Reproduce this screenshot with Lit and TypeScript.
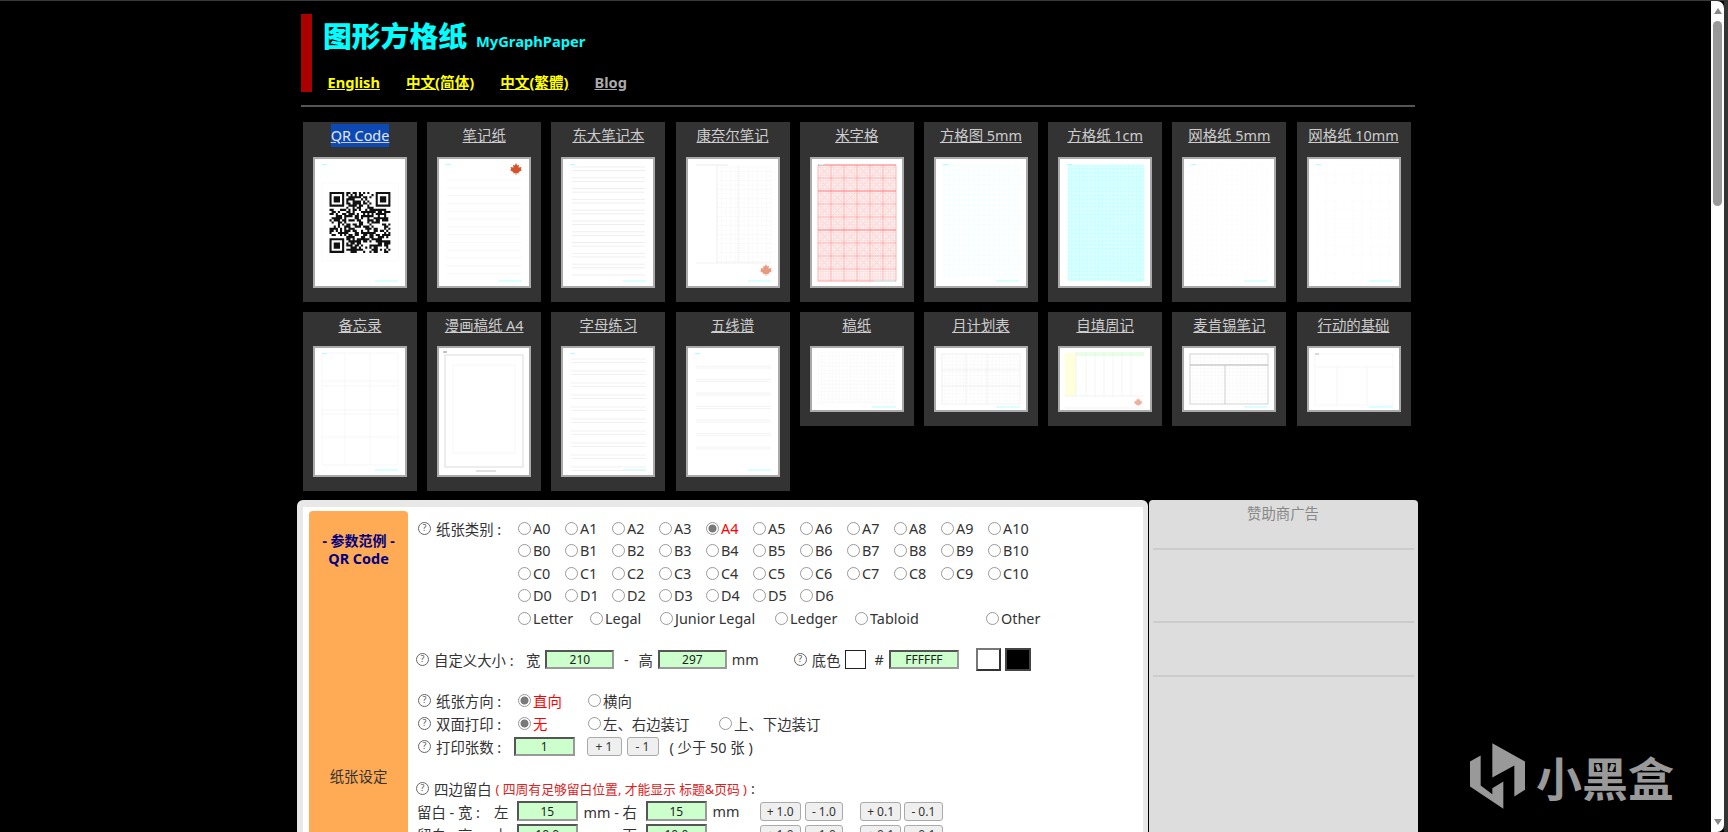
import {LitElement, html, css, svg} from 'lit';
import {customElement} from 'lit/decorators.js';

// helpers for the little paper previews
const hl = (ys: number[], x1: number, x2: number, c: string, w = 0.5) =>
  svg`<path d=${ys.map((y) => `M${x1} ${y}H${x2}`).join('')} stroke=${c} stroke-width=${w} fill="none" />`;
const vl = (xs: number[], y1: number, y2: number, c: string, w = 0.5) =>
  svg`<path d=${xs.map((x) => `M${x} ${y1}V${y2}`).join('')} stroke=${c} stroke-width=${w} fill="none" />`;
const range = (a: number, b: number, s: number) => {
  const out: number[] = [];
  for (let v = a; v <= b + 0.01; v += s) out.push(v);
  return out;
};
const grid = (x1: number, y1: number, x2: number, y2: number, s: number, c: string, w = 0.4) =>
  svg`${hl(range(y1, y2, s), x1, x2, c, w)}${vl(range(x1, x2, s), y1, y2, c, w)}`;
const box = (x: number, y: number, w: number, h: number, c: string, sw = 0.5) =>
  svg`<rect x=${x} y=${y} width=${w} height=${h} fill="none" stroke=${c} stroke-width=${sw} />`;
const marks = (h = 127, x = 60) =>
  svg`${hl([5.5], 7, 12, '#aaffff', 1)}${hl([h - 5], x, 83, '#b5ffff', 1)}`;
const leaf = (x: number, y: number, c: string, s = 1) =>
  svg`<polygon transform="translate(${x} ${y}) scale(${s})" fill=${c}
    points="6,0 7.2,2.5 9,1.8 8.5,4.5 11.5,4 10.8,6 12,7 8.5,9.2 8.8,10.5 6.4,10 6.4,12 5.6,12 5.6,10 3.2,10.5 3.5,9.2 0,7 1.2,6 .5,4 3.5,4.5 3,1.8 4.8,2.5" />`;

function qrModules() {
  const n = 29;
  let d = '';
  const inFinder = (r: number, c: number) =>
    (r < 8 && c < 8) || (r < 8 && c >= n - 8) || (r >= n - 8 && c < 8);
  let seed = 2463534242;
  const next = () => {
    seed ^= seed << 13;
    seed ^= seed >>> 17;
    seed ^= seed << 5;
    return seed >>> 0;
  };
  for (let r = 0; r < n; r++) {
    for (let c = 0; c < n; c++) {
      if (next() % 100 < 52 && !inFinder(r, c)) d += `M${c} ${r}h1v1h-1z`;
    }
  }
  const finder = (x: number, y: number) =>
    `M${x} ${y}h7v7h-7zM${x + 1} ${y + 1}v5h5v-5zM${x + 2} ${y + 2}h3v3h-3z`;
  return d + finder(0, 0) + finder(n - 7, 0) + finder(0, n - 7);
}

function crosses(x1: number, y1: number, x2: number, y2: number, s: number) {
  let d = '';
  for (let y = y1; y + s <= y2 + 0.01; y += s) {
    for (let x = x1; x + s <= x2 + 0.01; x += s) {
      d += `M${x} ${y}l${s} ${s}M${x + s} ${y}l${-s} ${s}`;
    }
  }
  return d;
}

const previews: Record<string, () => unknown> = {
  qr: () => svg`${marks()}${box(7, 24, 76.5, 78, '#f6f6f6')}
    <path transform="translate(14.5 33) scale(2.1)" fill-rule="evenodd" fill="#111" d=${qrModules()} />`,
  note: () => svg`${hl([5.5], 7, 12, '#aaffff', 1)}${hl([122], 60, 83, '#b5ffff', 1)}
    ${leaf(71, 4, '#d5532b')}${hl(range(21, 115, 7.8), 8, 82, '#eeeeee')}`,
  todai: () => svg`${marks()}${hl(range(8, 118, 3.6).filter((_, i) => i % 3 !== 2), 9, 82, '#dddddd', 0.5)}`,
  cornell: () => svg`${hl([122], 60, 83, '#b5ffff', 1)}
    ${grid(29, 8, 83, 104, 4.5, '#f2f2f2')}${vl([29, 50], 6, 104, '#e6e6e6')}
    ${hl([104], 8, 83, '#e0e0e0')}${hl([6], 8, 40, '#d5d5d5')}${leaf(72, 105, '#e89a80')}`,
  mi: () => svg`<rect x="6" y="6" width="78" height="116" fill="#fff6f6" />
    <path d=${crosses(6, 6, 84, 122, 13)} stroke="#ffb8b8" stroke-width="0.4" fill="none" />
    ${grid(6, 6, 84, 122, 2.6, '#ffcccc', 0.5)}${grid(6, 6, 84, 122, 13, '#ff9c9c', 0.6)}
    ${hl([6, 32, 71, 122], 6, 84, '#ff8888', 0.8)}${marks(127, 62)}`,
  sq5: () => svg`${grid(8, 6, 83, 120, 5, '#e6ffff', 0.5)}${marks()}`,
  sq1: () => svg`<rect x="8" y="6" width="76" height="116" fill="#dcffff" />
    ${grid(8, 6, 84, 122, 3.8, '#b8ffff', 0.5)}${marks()}`,
  grid5: () => svg`${grid(8, 6, 83, 120, 5, '#f8f8f8', 0.5)}${marks()}`,
  grid10: () => svg`${grid(8, 6, 83, 120, 9, '#f9f9f9', 0.5)}${marks()}`,
  memo: () => svg`${marks()}${vl([7, 30, 55, 83], 5, 117, '#eeeeee')}
    ${hl([5, 33, 38, 62, 66, 89, 117], 7, 83, '#eeeeee')}`,
  manga: () => svg`${box(6, 7, 78, 112, '#e6e6e6', 1.4)}${box(14, 17, 62, 88, '#eeeeee')}
    ${hl([4], 4, 8, '#888888', 1)}${hl([123], 37, 57, '#999999', 0.6)}`,
  letters: () => svg`${marks()}${hl(range(11, 120, 12).flatMap((y) => [y, y + 3.5]), 8, 83, '#eeeeee', 0.8)}`,
  staff: () => svg`${marks()}${hl(range(18, 112, 13.5).flatMap((y) => [y, y + 2]), 8, 83, '#f0f0f0', 0.8)}`,
  draft: () => svg`${grid(6, 4, 84, 56, 3.6, '#f4f4f4', 0.4)}${hl([59], 60, 84, '#b5ffff', 1)}`,
  month: () => svg`${grid(6, 6, 84, 56, 3.6, '#f5f5f5', 0.4)}${box(6, 6, 78, 50, '#e6e6e6')}
    ${vl([30, 51], 6, 56, '#e4e4e4')}${hl([22, 38], 6, 84, '#e4e4e4')}${hl([59], 60, 84, '#b5ffff', 1)}`,
  week: () => svg`<rect x="5" y="5" width="11" height="43" fill="#ffffdd" />
    <rect x="16" y="4" width="68" height="4" fill="#e6ffe6" />
    ${vl([16, 26, 35, 44, 53, 62, 71], 4, 48, '#e8e8e8')}${hl([48, 60], 5, 84, '#e6e6e6')}
    ${leaf(74, 50, '#f0b0a0', 0.7)}`,
  mck: () => svg`${grid(6, 6, 84, 56, 3.6, '#f4f4f4', 0.4)}${box(6, 6, 78, 50, '#c4c4c4', 0.7)}
    ${hl([17], 6, 84, '#aaaaaa', 0.9)}${vl([41], 17, 56, '#bbbbbb', 0.7)}${hl([59], 60, 84, '#b5ffff', 1)}`,
  action: () => svg`${box(6, 6, 78, 51, '#eeeeee')}${hl([19], 6, 84, '#e8e8e8')}
    ${vl([28, 58], 19, 57, '#eaeaea')}${hl([6], 6, 10, '#bbbbbb', 1)}${hl([59], 60, 84, '#b5ffff', 1)}`,
};

const cards: {name: string; kind: string; wide?: boolean; on?: boolean}[] = [
  {name: 'QR Code', kind: 'qr', on: true},
  {name: '笔记纸', kind: 'note'},
  {name: '东大笔记本', kind: 'todai'},
  {name: '康奈尔笔记', kind: 'cornell'},
  {name: '米字格', kind: 'mi'},
  {name: '方格图 5mm', kind: 'sq5'},
  {name: '方格纸 1cm', kind: 'sq1'},
  {name: '网格纸 5mm', kind: 'grid5'},
  {name: '网格纸 10mm', kind: 'grid10'},
  {name: '备忘录', kind: 'memo'},
  {name: '漫画稿纸 A4', kind: 'manga'},
  {name: '字母练习', kind: 'letters'},
  {name: '五线谱', kind: 'staff'},
  {name: '稿纸', kind: 'draft', wide: true},
  {name: '月计划表', kind: 'month', wide: true},
  {name: '自填周记', kind: 'week', wide: true},
  {name: '麦肯锡笔记', kind: 'mck', wide: true},
  {name: '行动的基础', kind: 'action', wide: true},
];

const sizes = [
  ['A0', 'A1', 'A2', 'A3', 'A4', 'A5', 'A6', 'A7', 'A8', 'A9', 'A10'],
  ['B0', 'B1', 'B2', 'B3', 'B4', 'B5', 'B6', 'B7', 'B8', 'B9', 'B10'],
  ['C0', 'C1', 'C2', 'C3', 'C4', 'C5', 'C6', 'C7', 'C8', 'C9', 'C10'],
  ['D0', 'D1', 'D2', 'D3', 'D4', 'D5', 'D6'],
];

@customElement('app-root')
export class AppRoot extends LitElement {
  static override styles = css`
    :host {
      display: block;
      height: 832px;
      overflow: hidden;
      position: relative;
      background: #000;
      font-family: 'Noto Sans', 'Noto Sans CJK SC', sans-serif;
      font-size: 14.4px;
      color: #333;
    }
    .topline {
      position: absolute;
      left: 0;
      right: 0;
      top: 0;
      height: 1px;
      background: #3a3a3a;
    }
    .wrap {
      width: 1121px;
      margin-left: 297px;
      padding-top: 14px;
    }
    .head {
      display: flex;
      height: 78px;
      margin-left: 4px;
    }
    .bar {
      width: 11px;
      background: #aa0000;
    }
    .brand {
      margin-left: 11px;
    }
    .title {
      display: flex;
      align-items: baseline;
      gap: 9px;
      height: 46px;
      color: #00ffff;
      font-weight: 700;
    }
    .title b {
      font-size: 28.8px;
      line-height: 44px;
    }
    .title span {
      font-size: 14.7px;
    }
    .nav {
      display: flex;
      gap: 26px;
      padding-left: 4.5px;
      font-size: 14.6px;
      font-weight: 700;
      line-height: 24px;
      margin-top: 10px;
    }
    .nav a {
      color: #ffff00;
    }
    .nav a.blog {
      color: #aaa;
    }
    .rule {
      height: 2px;
      background: #555;
      margin: 13px 3px 0 4px;
    }
    .cards {
      display: grid;
      grid-template-columns: repeat(9, 114px);
      column-gap: 10.2px;
      row-gap: 10px;
      align-items: start;
      margin: 15px 0 0 6px;
    }
    .card {
      background: #333;
      padding: 0 10px 14px;
      text-align: center;
    }
    .card a {
      display: block;
      height: 28px;
      line-height: 28px;
      margin-bottom: 6.5px;
      color: #ccc;
      white-space: nowrap;
    }
    .card a span.on {
      background: #0c49b4;
      color: #e6e6e6;
      padding: 2px 0;
    }
    .thumb {
      display: block;
      box-sizing: border-box;
      width: 94px;
      height: 131px;
      border: 2px solid #aaa;
      background: #fff;
    }
    .thumb.wide {
      height: 66px;
    }
    .panels {
      display: flex;
      gap: 1px;
      margin-top: 9px;
    }
    .main {
      box-sizing: border-box;
      width: 850.5px;
      height: 500px;
      padding: 7px 5px 0 6px;
      background: #e8e8e8;
      border-radius: 6px 6px 0 0;
    }
    .sheet {
      display: flex;
      height: 100%;
      background: #fff;
      padding: 4px 0 0 6px;
      box-sizing: border-box;
    }
    .side {
      width: 99px;
      flex: none;
      background: #ffaa55;
      border-radius: 4px 4px 0 0;
      text-align: center;
      color: #000080;
      font-weight: 700;
    }
    .side p {
      margin: 0;
    }
    .side .ex {
      font-size: 14px;
      line-height: 18px;
      padding-top: 21px;
    }
    .side .qr {
      font-size: 14.4px;
      line-height: 18px;
    }
    .side .set {
      margin-top: 199px;
      font-weight: 400;
      color: #333;
      font-size: 14.4px;
      line-height: 20px;
    }
    .form {
      padding: 6px 0 0 10px;
    }
    .row {
      display: flex;
      align-items: center;
      height: 22.5px;
      white-space: nowrap;
    }
    .out {
      margin-left: -2px;
    }
    .lab {
      display: flex;
      align-items: center;
      gap: 5px;
      width: 100px;
      flex: none;
    }
    .lab.short {
      width: 96px;
    }
    .help {
      box-sizing: border-box;
      display: inline-block;
      width: 13px;
      height: 13px;
      flex: none;
      border: 1.2px solid #666;
      border-radius: 50%;
      font-size: 9px;
      line-height: 10.5px;
      text-align: center;
      color: #555;
    }
    .gap18 {
      margin-top: 18px;
      height: 24px;
    }
    .gap17 {
      margin-top: 17px;
      height: 24px;
    }
    .gap19 {
      margin-top: 19px;
    }
    .tall {
      height: 23px;
    }
    .sizes {
      display: grid;
      grid-template-columns: repeat(11, 47px);
    }
    .pick {
      display: inline-flex;
      align-items: center;
      gap: 2px;
    }
    .w70 {
      width: 70px;
    }
    .w72 {
      width: 72px;
    }
    .w80 {
      width: 80px;
    }
    .w115 {
      width: 115px;
    }
    .w131 {
      width: 131px;
    }
    input[type='radio'] {
      appearance: none;
      box-sizing: border-box;
      width: 13px;
      height: 13px;
      margin: 0;
      flex: none;
      border: 1px solid #999;
      border-radius: 50%;
      background: #fff;
    }
    input[type='radio']:checked {
      background: radial-gradient(circle, #7a7a7a 0 3.6px, #fff 4.4px);
    }
    .red {
      color: #ff0000;
    }
    .num {
      box-sizing: border-box;
      width: 69px;
      height: 19.5px;
      padding: 0;
      border: 2px solid;
      border-color: #555 #999 #999 #555;
      background: #ccffcc;
      font: 12px 'Noto Sans', sans-serif;
      color: #222;
      text-align: center;
      outline: none;
    }
    .n60 {
      width: 60.5px;
    }
    .n70 {
      width: 70px;
    }
    .btn {
      box-sizing: border-box;
      height: 19px;
      padding: 0;
      border: 1px solid #aaa;
      border-radius: 3px;
      background: #efefef;
      font: 12px 'Noto Sans', sans-serif;
      color: #333;
    }
    .b35 {
      width: 35px;
    }
    .b32 {
      width: 32px;
    }
    .b41 {
      width: 41px;
    }
    .b38 {
      width: 38.5px;
    }
    .wide-lab {
      width: 92px;
    }
    .dash {
      width: 24px;
      text-align: center;
    }
    .mm {
      width: 26px;
    }
    .swatch {
      box-sizing: border-box;
      width: 21px;
      height: 19px;
      border: 1px solid #222;
      background: #fff;
    }
    .chip {
      box-sizing: border-box;
      width: 25px;
      height: 23px;
      border: 2px solid;
      border-color: #777 #333 #333 #777;
      background: #fff;
    }
    .chip.dark {
      width: 26px;
      border-color: #444;
      background: #000;
    }
    .ml3 {
      margin-left: 3px;
    }
    .ml4 {
      margin-left: 4px;
    }
    .ml5 {
      margin-left: 5px;
    }
    .ml6 {
      margin-left: 6px;
    }
    .ml8 {
      margin-left: 8.6px;
    }
    .ml9 {
      margin-left: 9px;
    }
    .ml11 {
      margin-left: 11px;
    }
    .ml12 {
      margin-left: 12px;
    }
    .ml17 {
      margin-left: 17px;
    }
    .ml21 {
      margin-left: 21px;
    }
    .ml36 {
      margin-left: 36px;
    }
    .note {
      margin-left: 4px;
      color: #dd2222;
      font-size: 12.8px;
    }
    .mlab {
      width: 77px;
      margin-left: -1px;
    }
    .mid {
      width: 54px;
    }
    .ads {
      box-sizing: border-box;
      width: 269px;
      height: 500px;
      padding: 4px 4px 0;
      background: #dddddd;
      border-radius: 4px 4px 0 0;
      color: #888;
      text-align: center;
    }
    .ads div {
      border-bottom: 2px solid #cccccc;
    }
    .ads .a1 {
      height: 44px;
      line-height: 20px;
    }
    .ads .a2 {
      height: 71px;
    }
    .ads .a3 {
      height: 52px;
    }
    .scroll {
      position: absolute;
      top: 1px;
      right: 4px;
      bottom: 0;
      width: 13px;
      background: #fdfdfd;
      border-radius: 0 7px 7px 0;
    }
    .edge {
      position: absolute;
      top: 0;
      right: 0;
      bottom: 0;
      width: 4px;
      background: #333;
    }
    .thumbbar {
      position: absolute;
      top: 20px;
      left: 2px;
      width: 9px;
      height: 185px;
      border-radius: 4.5px;
      background: #999;
    }
    .up,
    .down {
      position: absolute;
      left: 2.5px;
      width: 0;
      height: 0;
      border-left: 4px solid transparent;
      border-right: 4px solid transparent;
    }
    .up {
      top: 7px;
      border-bottom: 6px solid #888;
    }
    .down {
      bottom: 7px;
      border-top: 6px solid #888;
    }
    .mark {
      position: absolute;
      left: 1470px;
      top: 743px;
      display: flex;
      align-items: center;
      gap: 11px;
      color: #999;
      font-family: 'Noto Sans CJK SC', sans-serif;
      font-size: 46px;
      font-weight: 700;
      line-height: 66px;
    }
    .mark svg {
      display: block;
    }
  `;

  pick(group: string, label: string, checked = false, cls = '') {
    return html`<label class="pick ${cls}">
      <input type="radio" name=${group} ?checked=${checked} /><span class=${checked ? 'red' : ''}>${label}</span>
    </label>`;
  }

  marginRow(name: string, a: string, b: string, v: string) {
    return html`<div class="row tall">
      <span class="mlab">留白 - ${name} :</span><span>${a}</span>
      <input class="num n60 ml8" .value=${v} />
      <span class="mid ml6">mm - ${b}</span>
      <input class="num n60 ml8" .value=${v} />
      <span class="mm ml6">mm</span>
      <button class="btn b41 ml21">+ 1.0</button>
      <button class="btn b38 ml4">- 1.0</button>
      <button class="btn b41 ml17">+ 0.1</button>
      <button class="btn b38 ml3">- 0.1</button>
    </div>`;
  }

  override render() {
    return html`
      <div class="wrap">
        <header class="head">
          <div class="bar"></div>
          <div class="brand">
            <div class="title"><b>图形方格纸</b><span>MyGraphPaper</span></div>
            <nav class="nav">
              <a href="#">English</a>
              <a href="#">中文(简体)</a>
              <a href="#">中文(繁體)</a>
              <a href="#" class="blog">Blog</a>
            </nav>
          </div>
        </header>
        <div class="rule"></div>

        <section class="cards">
          ${cards.map(
            (c) => html`<div class="card">
              <a href="#"><span class=${c.on ? 'on' : ''}>${c.name}</span></a>
              <svg class="thumb ${c.wide ? 'wide' : ''}" viewBox="0 0 90 ${c.wide ? 62 : 127}" preserveAspectRatio="none">
                ${previews[c.kind]()}
              </svg>
            </div>`
          )}
        </section>

        <section class="panels">
          <div class="main">
            <div class="sheet">
              <aside class="side">
                <p class="ex">- 参数范例 -</p>
                <p class="qr">QR Code</p>
                <p class="set">纸张设定</p>
              </aside>
              <div class="form">
                <div class="row">
                  <span class="lab"><span class="help">?</span>纸张类别 :</span>
                  <div class="sizes">
                    ${sizes[0].map((s) => this.pick('size', s, s === 'A4'))}
                  </div>
                </div>
                ${sizes.slice(1).map(
                  (line) => html`<div class="row">
                    <span class="lab"></span>
                    <div class="sizes">${line.map((s) => this.pick('size', s))}</div>
                  </div>`
                )}
                <div class="row">
                  <span class="lab"></span>
                  ${this.pick('size', 'Letter', false, 'w72')}
                  ${this.pick('size', 'Legal', false, 'w70')}
                  ${this.pick('size', 'Junior Legal', false, 'w115')}
                  ${this.pick('size', 'Ledger', false, 'w80')}
                  ${this.pick('size', 'Tabloid', false, 'w131')}
                  ${this.pick('size', 'Other')}
                </div>

                <div class="row out gap18">
                  <span class="help">?</span>
                  <span class="wide-lab ml5">自定义大小 :</span>
                  <span>宽</span>
                  <input class="num ml5" .value=${'210'} />
                  <span class="dash">-</span>
                  <span>高</span>
                  <input class="num ml5" .value=${'297'} />
                  <span class="mm ml5">mm</span>
                  <span class="help ml36">?</span>
                  <span class="ml5">底色</span>
                  <span class="swatch ml4"></span>
                  <span class="ml9">#</span>
                  <input class="num n70 ml5" .value=${'FFFFFF'} />
                  <span class="chip ml17"></span>
                  <span class="chip dark ml4"></span>
                </div>

                <div class="row gap17">
                  <span class="lab"><span class="help">?</span>纸张方向 :</span>
                  ${this.pick('dir', '直向', true, 'w70')}
                  ${this.pick('dir', '横向')}
                </div>
                <div class="row">
                  <span class="lab"><span class="help">?</span>双面打印 :</span>
                  ${this.pick('duplex', '无', true, 'w70')}
                  ${this.pick('duplex', '左、右边装订', false, 'w131')}
                  ${this.pick('duplex', '上、下边装订')}
                </div>
                <div class="row tall">
                  <span class="lab short"><span class="help">?</span>打印张数 :</span>
                  <input class="num n60" .value=${'1'} />
                  <button class="btn b35 ml12">+ 1</button>
                  <button class="btn b32 ml5">- 1</button>
                  <span class="ml11">( 少于 50 张 )</span>
                </div>

                <div class="row out gap19">
                  <span class="help">?</span>
                  <span class="ml5">四边留白</span>
                  <span class="note">( 四周有足够留白位置, 才能显示 标题&页码 )</span>
                  <span class="ml4">:</span>
                </div>
                ${this.marginRow('宽', '左', '右', '15')}
                ${this.marginRow('高', '上', '下', '10.0')}
              </div>
            </div>
          </div>
          <aside class="ads">
            <div class="a1">赞助商广告</div>
            <div class="a2"></div>
            <div class="a3"></div>
          </aside>
        </section>
      </div>

      <div class="topline"></div>
      <div class="scroll">
        <span class="up"></span>
        <span class="thumbbar"></span>
        <span class="down"></span>
      </div>
      <div class="edge"></div>
      <div class="mark">
        <svg width="55" height="66" viewBox="30 25 165 197" fill="#999">
          <polygon points="62,62 30,80 30,155 130,222 130,140 97,160 97,178 62,152" />
          <polygon points="97,25 195,80 195,165 163,185 163,92 130,110 97,128" />
        </svg>
        <span>小黑盒</span>
      </div>
    `;
  }
}

declare global {
  interface HTMLElementTagNameMap {
    'app-root': AppRoot;
  }
}
